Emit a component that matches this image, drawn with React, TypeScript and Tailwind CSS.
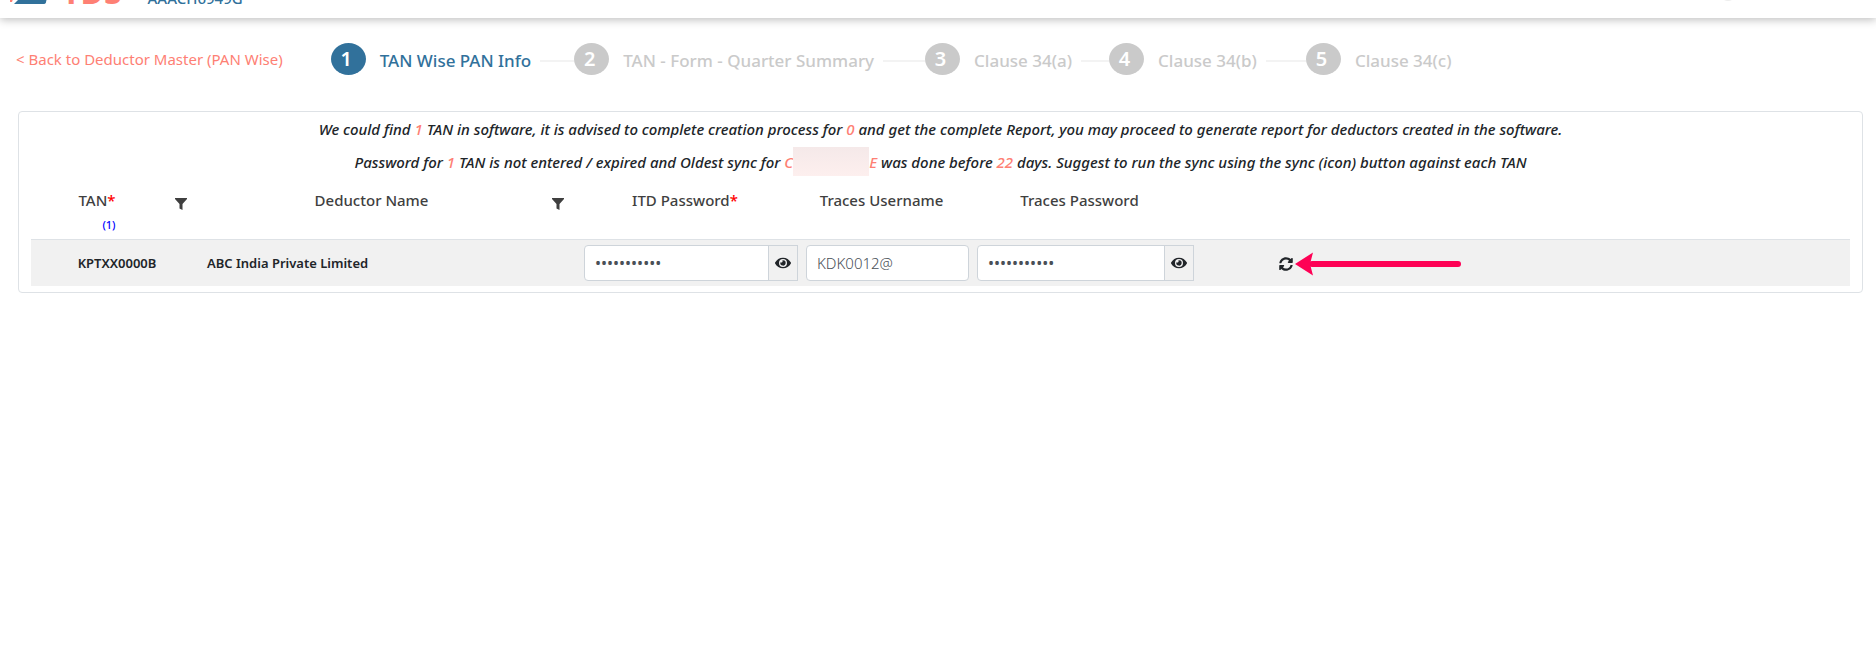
import React, { useState } from "react";
import clsx from "clsx";
import { FaEye, FaSyncAlt } from "react-icons/fa";

const steps = [
    { id: 1, label: "TAN Wise PAN Info", gap: "w-[34px]" },
    { id: 2, label: "TAN - Form - Quarter Summary", gap: "w-[42px]" },
    { id: 3, label: "Clause 34(a)", gap: "w-7" },
    { id: 4, label: "Clause 34(b)", gap: "w-10" },
    { id: 5, label: "Clause 34(c)", gap: "" },
];

function Header() {
    return (
        <header className="bg-white shadow-[0_2px_8px_rgba(0,0,0,0.25)]">
            <div className="flex h-[18px] items-end justify-between overflow-hidden pr-[140px] pl-[10px]">
                <div className="flex items-end">
                    <svg className="mb-[14px] h-[10px] w-[40px] shrink-0" viewBox="0 0 40 10">
                        <path d="M0 5h3l-1 3H0z" fill="#fe8074" />
                        <path d="M4 10L14 0h24l-2 8q0 2-3 2z" fill="#31719b" />
                    </svg>
                    <span className="ml-3 pb-3 text-[32px] leading-7 font-bold text-[#fe8074]">TDS</span>
                    <span className="ml-[26px] pb-[6px] text-[15px] leading-7 font-medium text-[#31719b]">AAACH6949G</span>
                </div>
                <span className="mb-[17px] size-4 shrink-0 rounded-full bg-[#ededed]" />
            </div>
        </header>
    );
}

function Stepper() {
    const [active, setActive] = useState<number>(1);

    return (
        <ol className="flex items-center">
            {steps.map((s) => (
                <li key={s.id} className="flex items-center">
                    <button
                        onClick={() => setActive(s.id)}
                        className={clsx("flex items-center text-[17px] whitespace-nowrap", active === s.id ? "text-[#31719b]" : "text-[#cacaca]")}
                    >
                        <span
                            className={clsx(
                                "mr-[14px] flex h-8 w-[35px] items-center justify-center rounded-[50%] pr-1 text-xl font-semibold text-white",
                                active === s.id ? "bg-[#31719b]" : "bg-[#cacaca]"
                            )}
                        >
                            {s.id}
                        </span>
                        <span className="pt-[3px] font-medium">{s.label}</span>
                    </button>
                    {s.gap && <span className={clsx("mt-1 ml-[9px] h-[2px] bg-[#f3f3f3]", s.gap)} />}
                </li>
            ))}
        </ol>
    );
}

function Num({ children }: { children: React.ReactNode }) {
    return <span className="text-[#fe8074]">{children}</span>;
}

function PasswordField({ label }: { label: string }) {
    const [visible, setVisible] = useState<boolean>(false);
    return (
        <div className="flex h-9">
            <input
                aria-label={label}
                type={visible ? "text" : "password"}
                defaultValue="Password@12"
                className="w-full min-w-0 rounded-l border border-[#ced4da] bg-white px-[10px] text-base text-[#495057]"
            />
            <button
                aria-label={`Show ${label}`}
                onClick={() => setVisible(!visible)}
                className="-ml-px flex w-[30px] shrink-0 items-center justify-center border border-[#ced4da] bg-[#f1f1f1] text-[#212529]"
            >
                <FaEye size={16} />
            </button>
        </div>
    );
}

function HeadCell({ title, required, filter, count }: { title: string; required?: boolean; filter?: boolean; count?: number }) {
    return (
        <th className="h-[60px] p-0 align-top font-medium">
            <div className="flex pt-[11px]">
                <div className="flex flex-1 justify-center">
                    <div className="leading-5">
                        {title}
                        {required && <span className="text-[#ff0000]">*</span>}
                        {count && <div className="pt-[5px] text-right text-[11px] text-[#0000ff]">({count})</div>}
                    </div>
                </div>
                {filter ? (
                    <button aria-label={`Filter ${title}`} className="mr-4 ml-3 flex h-7 items-center">
                        <svg className="h-3 w-3" viewBox="0 0 12 12" fill="currentColor">
                            <path d="M0 0h12v1L7.500 6v6L4.500 10.500V6L0 1z" />
                        </svg>
                    </button>
                ) : (
                    <span className="w-3" />
                )}
            </div>
        </th>
    );
}

function TanTable() {
    return (
        <table className="w-full table-fixed border-collapse text-[15px] text-[#3f3f3f]">
            <colgroup>
                <col className="w-[172px]" />
                <col className="w-[377px]" />
                <col className="w-[222px]" />
                <col className="w-[171px]" />
                <col className="w-[225px]" />
                <col className="w-[176px]" />
                <col />
            </colgroup>
            <thead>
                <tr>
                    <HeadCell title="TAN" required filter count={1} />
                    <HeadCell title="Deductor Name" filter />
                    <HeadCell title="ITD Password" required />
                    <HeadCell title="Traces Username" />
                    <HeadCell title="Traces Password" />
                    <th />
                    <th />
                </tr>
            </thead>
            <tbody>
                <tr className="h-[47px] border-t border-[#dee2e6] bg-[#f1f1f1]">
                    <td className="pt-[2px] text-center text-[13px] font-semibold text-[#212529]">KPTXX0000B</td>
                    <td className="px-1 pt-[2px] text-[13px] font-semibold text-[#212529]">ABC India Private Limited</td>
                    <td className="px-1">
                        <PasswordField label="ITD Password" />
                    </td>
                    <td className="px-1">
                        <input
                            aria-label="Traces Username"
                            defaultValue="KDK0012@"
                            className="block h-9 w-full rounded border border-[#ced4da] bg-white px-[10px] text-[15px] font-light text-[#495057]"
                        />
                    </td>
                    <td className="px-1">
                        <PasswordField label="Traces Password" />
                    </td>
                    <td className="pt-[2px]">
                        <div className="relative mx-auto w-[14px]">
                            <button aria-label="Sync" className="block text-[#212529]">
                                <FaSyncAlt size={14} />
                            </button>
                            <svg className="absolute top-1/2 left-4 h-6 w-[167px] -translate-y-1/2" viewBox="0 0 167 24">
                                <path d="M17 12H163" stroke="#fe0155" strokeWidth="6" strokeLinecap="round" />
                                <path d="M0 12L18 0.500L15 12L18 23.500Z" fill="#fe0155" />
                            </svg>
                        </div>
                    </td>
                    <td />
                </tr>
            </tbody>
        </table>
    );
}

function App() {
    return (
        <div className="min-h-screen bg-white font-['Noto_Sans','Open_Sans',sans-serif] text-[#212529]">
            <Header />
            <nav className="flex h-[93px] items-start pt-[25px] pl-4">
                <a href="#" className="mr-12 flex h-8 items-center text-[15px] whitespace-nowrap text-[#fe8074]">
                    &lt; Back to Deductor Master (PAN Wise)
                </a>
                <Stepper />
            </nav>
            <main className="mr-[13px] ml-[18px] rounded border border-[#dee2e6] px-3 pb-[6px]">
                <div className="pt-[1px] text-center text-[15px] font-medium italic">
                    <p className="leading-[33px]">
                        We could find <Num>1</Num> TAN in software, it is advised to complete creation process for <Num>0</Num> and get the
                        complete Report, you may proceed to generate report for deductors created in the software.
                    </p>
                    <p className="leading-[33px]">
                        Password for <Num>1</Num> TAN is not entered / expired and Oldest sync for <Num>C</Num>
                        <span className="inline-block h-[29px] w-[76px] bg-linear-to-b from-[#f5e9e9] to-[#fdefee] align-[-8px]" />
                        <Num>E</Num> was done before <Num>22</Num> days. Suggest to run the sync using the sync (icon) button against each TAN
                    </p>
                </div>
                <TanTable />
            </main>
        </div>
    );
}

export default App;
